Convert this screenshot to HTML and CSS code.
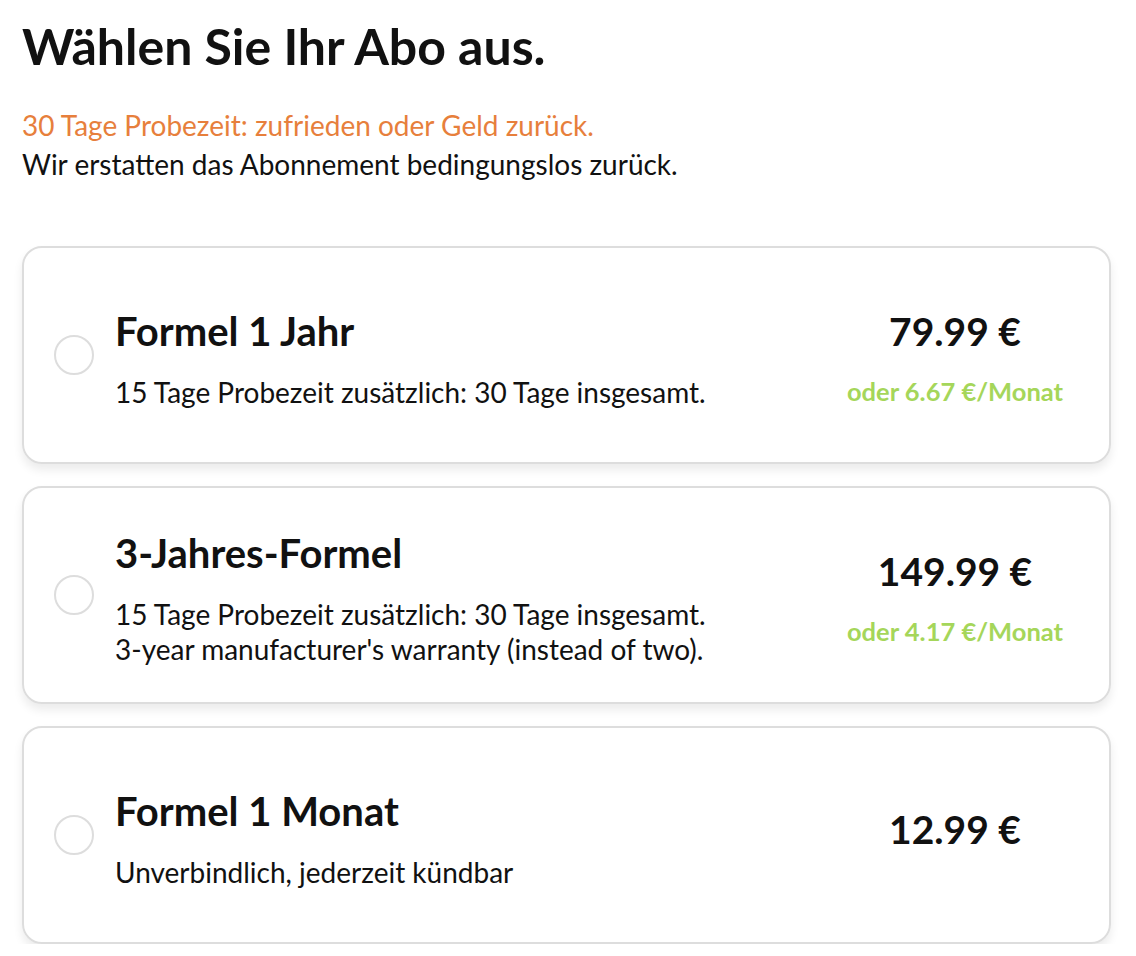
FILE: index.html
```html
<!DOCTYPE html>
<html lang="de">
    <head>
        <meta charset="UTF-8" />
        <meta name="viewport" content="width=device-width, initial-scale=1.0" />
        <title>Abo wählen</title>
        <link rel="stylesheet" href="styles.css">
    </head>
    <body>
        <div class="wrapper">
            <h1>Wählen Sie Ihr Abo aus.</h1>
            <p class="intro">
                <span class="guarantee">30 Tage Probezeit: zufrieden oder Geld zurück.</span><br>
                Wir erstatten das Abonnement bedingungslos zurück.
            </p>

            <div class="plans">
                <label class="plan">
                    <span class="radio"></span>
                    <div class="plan-info">
                        <h2>Formel 1 Jahr</h2>
                        <p>15 Tage Probezeit zusätzlich: 30 Tage insgesamt.</p>
                    </div>
                    <div class="plan-price">
                        <span class="amount">79.99 €</span>
                        <span class="monthly">oder 6.67 €/Monat</span>
                    </div>
                </label>

                <label class="plan">
                    <span class="radio"></span>
                    <div class="plan-info">
                        <h2>3-Jahres-Formel</h2>
                        <p>15 Tage Probezeit zusätzlich: 30 Tage insgesamt.<br>
                        3-year manufacturer's warranty (instead of two).</p>
                    </div>
                    <div class="plan-price">
                        <span class="amount">149.99 €</span>
                        <span class="monthly">oder 4.17 €/Monat</span>
                    </div>
                </label>

                <!-- monthly plan has no per-month hint -->
                <label class="plan">
                    <span class="radio"></span>
                    <div class="plan-info">
                        <h2>Formel 1 Monat</h2>
                        <p>Unverbindlich, jederzeit kündbar</p>
                    </div>
                    <div class="plan-price single">
                        <span class="amount">12.99 €</span>
                    </div>
                </label>
            </div>
        </div>
    </body>
</html>
```

FILE: styles.css
```css
body {
    margin: 0;
    font-family: Lato, "Noto Sans", sans-serif;
    color: #111111;
    background: #ffffff;
}

div.wrapper {
    padding: 16px 25px 0 22px;
}

h1 {
    margin: 0;
    font-size: 50px;
    line-height: 1.2;
    font-weight: 700;
}

.intro {
    margin: 30px 0 0;
    font-size: 28px;
    line-height: 39px;
}

.guarantee {
    color: #e77f3c;
}

.plans {
    display: flex;
    flex-direction: column;
    gap: 22px;
    margin-top: 62px;
}

.plan {
    display: flex;
    align-items: center;
    gap: 21px;
    box-sizing: border-box;
    min-height: 218px;
    padding: 0 42px 0 30px;
    border: 2px solid #dddddd;
    border-radius: 20px;
    box-shadow: 0 6px 10px rgba(0, 0, 0, 0.08);
    cursor: pointer;
}

.radio {
    flex: none;
    box-sizing: border-box;
    width: 40px;
    height: 40px;
    border: 2px solid #dddddd;
    border-radius: 50%;
}

.plan-info {
    flex: 1;
    padding-top: 6px;
}

.plan-info h2 {
    margin: 0 0 20px;
    font-size: 40px;
    line-height: 1.2;
    font-weight: 700;
}

.plan-info p {
    margin: 0;
    font-size: 28px;
    line-height: 35px;
}

.plan-price {
    display: flex;
    flex-direction: column;
    align-items: center;
    width: 222px;
    margin-right: 1px;
    padding-top: 5px;
}

.plan-price.single {
    padding-bottom: 16px;
}

.amount {
    font-size: 39px;
    line-height: 1.2;
    font-weight: 700;
}

.monthly {
    margin-top: 21px;
    font-size: 25.5px;
    line-height: 1.2;
    font-weight: 700;
    color: #a5d65a;
}
```
